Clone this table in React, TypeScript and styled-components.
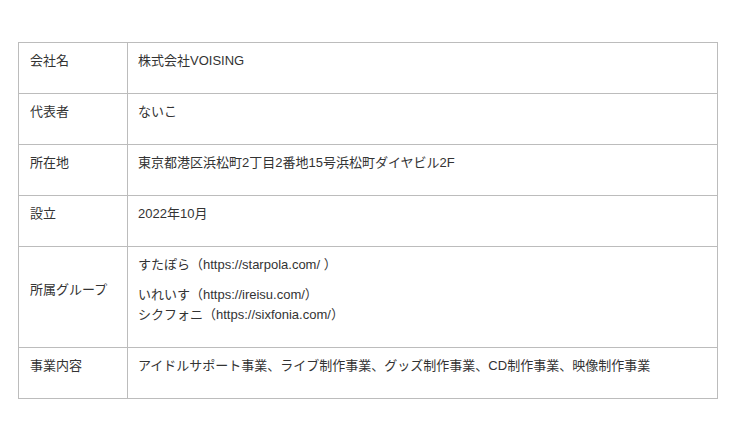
import styled, { createGlobalStyle } from "styled-components";

const GlobalStyle = createGlobalStyle`
  html, body {
    margin: 0;
    padding: 0;
    background: #ffffff;
  }
  body {
    font-family: "Liberation Sans", "Noto Sans CJK JP", sans-serif;
    color: #333333;
  }
`;

const Page = styled.div`
  padding: 42px 0 0 18px;
`;

const Table = styled.table`
  width: 700px;
  border-collapse: collapse;
  font-size: 13px;
  line-height: 20px;
`;

const Label = styled.th`
  width: 87px;
  padding: 8px 10px 22px 11px;
  border: 1px solid #bcbcbc;
  text-align: left;
  font-weight: normal;
  vertical-align: middle;
  white-space: nowrap;
`;

const Value = styled.td`
  padding: 8px 10px 22px 10px;
  border: 1px solid #bcbcbc;
  vertical-align: top;
`;

const Para = styled.p`
  margin: 0;
  & + & {
    margin-top: 10px;
  }
`;

const rows: { label: string; value: string[][] }[] = [
  { label: "会社名", value: [["株式会社VOISING"]] },
  { label: "代表者", value: [["ないこ"]] },
  { label: "所在地", value: [["東京都港区浜松町2丁目2番地15号浜松町ダイヤビル2F"]] },
  { label: "設立", value: [["2022年10月"]] },
  {
    label: "所属グループ",
    value: [
      ["すたぽら（https://starpola.com/ ）"],
      ["いれいす（https://ireisu.com/）", "シクフォニ（https://sixfonia.com/）"],
    ],
  },
  {
    label: "事業内容",
    value: [["アイドルサポート事業、ライブ制作事業、グッズ制作事業、CD制作事業、映像制作事業"]],
  },
];

export default function App() {
  return (
    <>
      <GlobalStyle />
      <Page>
        <Table>
          <tbody>
            {rows.map((row) => (
              <tr key={row.label}>
                <Label>{row.label}</Label>
                <Value>
                  {row.value.map((lines, i) => (
                    <Para key={i}>
                      {lines.map((line, j) => (
                        <span key={j}>
                          {j > 0 && <br />}
                          {line}
                        </span>
                      ))}
                    </Para>
                  ))}
                </Value>
              </tr>
            ))}
          </tbody>
        </Table>
      </Page>
    </>
  );
}
